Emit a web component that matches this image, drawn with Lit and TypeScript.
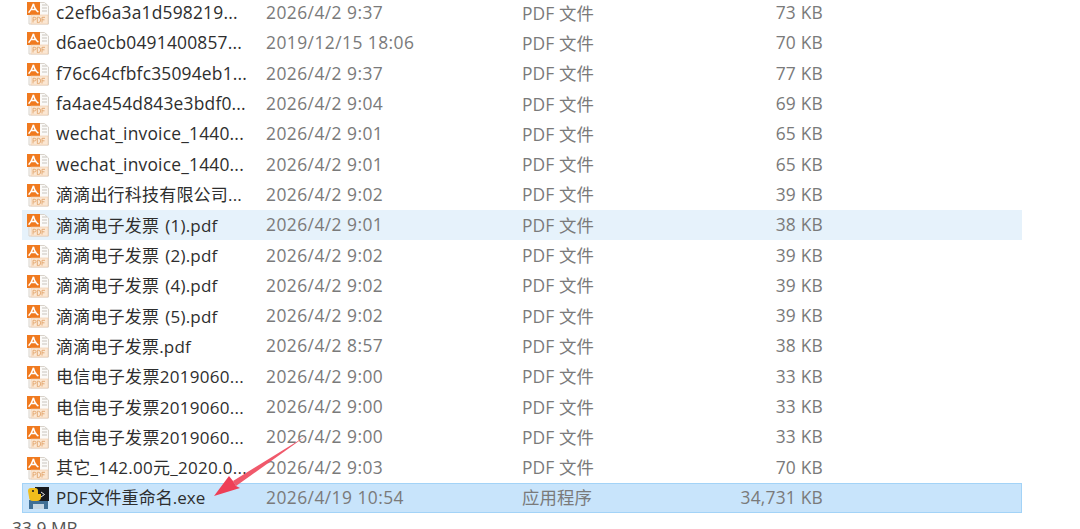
import { LitElement, html, css, svg } from "lit";
import { customElement } from "lit/decorators.js";

type Row = { n: string; d: string; t: string; s: string; k?: string; c?: string };
const P = "PDF 文件";
const rows: Row[] = [
  { n: "c2efb6a3a1d598219...", d: "2026/4/2 9:37", t: P, s: "73 KB" },
  { n: "d6ae0cb0491400857...", d: "2019/12/15 18:06", t: P, s: "70 KB" },
  { n: "f76c64cfbfc35094eb1...", d: "2026/4/2 9:37", t: P, s: "77 KB" },
  { n: "fa4ae454d843e3bdf0...", d: "2026/4/2 9:04", t: P, s: "69 KB" },
  { n: "wechat_invoice_1440...", d: "2026/4/2 9:01", t: P, s: "65 KB" },
  { n: "wechat_invoice_1440...", d: "2026/4/2 9:01", t: P, s: "65 KB" },
  { n: "滴滴出行科技有限公司...", d: "2026/4/2 9:02", t: P, s: "39 KB", c: "cjk" },
  { n: "滴滴电子发票 (1).pdf", d: "2026/4/2 9:01", t: P, s: "38 KB", k: "hover", c: "cjk" },
  { n: "滴滴电子发票 (2).pdf", d: "2026/4/2 9:02", t: P, s: "39 KB", c: "cjk" },
  { n: "滴滴电子发票 (4).pdf", d: "2026/4/2 9:02", t: P, s: "39 KB", c: "cjk" },
  { n: "滴滴电子发票 (5).pdf", d: "2026/4/2 9:02", t: P, s: "39 KB", c: "cjk" },
  { n: "滴滴电子发票.pdf", d: "2026/4/2 8:57", t: P, s: "38 KB", c: "cjk" },
  { n: "电信电子发票2019060...", d: "2026/4/2 9:00", t: P, s: "33 KB", c: "mix" },
  { n: "电信电子发票2019060...", d: "2026/4/2 9:00", t: P, s: "33 KB", c: "mix" },
  { n: "电信电子发票2019060...", d: "2026/4/2 9:00", t: P, s: "33 KB", c: "mix" },
  { n: "其它_142.00元_2020.0...", d: "2026/4/2 9:03", t: P, s: "70 KB", c: "mix" },
  { n: "PDF文件重命名.exe", d: "2026/4/19 10:54", t: "应用程序", s: "34,731 KB", k: "sel", c: "exe" },
];

const pdfIcon = svg`<svg width="24" height="24" viewBox="0 0 24 24">
  <path d="M9 1.5H18.5L22.5 5V23H3V13H9Z" fill="#fbfaf8" stroke="#d8d2ca"/>
  <rect x="1" y="1" width="13" height="13" fill="#f07a1f"/>
  <path d="M7.5 2.8C6.7 5.5 5.5 9 2.6 11.8M7.5 2.8C8.1 6 9 9 12.4 11M4.4 8.6H10.6" fill="none" stroke="#fff" stroke-width="1.5"/>
  <path d="M16 4H21M16 7H21M16 10H21" stroke="#c9c4bd" stroke-width="1"/>
  <rect x="5" y="14" width="17" height="9" fill="#fbe7d3" stroke="#eecaa8" stroke-width=".6"/>
  <path d="M7 21.5V16.3H8.8Q10 16.3 10 17.6T8.8 18.9H7M11.3 16.3V21.5H12.6Q14.6 21.5 14.6 18.9T12.6 16.3ZM16 21.5V16.3H19M16 18.8H18.5" fill="none" stroke="#e2a56c" stroke-width=".9"/>
</svg>`;

const exeIcon = svg`<svg width="24" height="24" viewBox="0 0 24 24">
  <path d="M3 14H22V23H3Z" fill="#3f6f96"/>
  <rect x="7" y="18" width="11" height="5" fill="#c4d6e4"/>
  <rect x="9" y="1" width="14" height="14" fill="#17191d"/>
  <path d="M15 6L18.5 8.5L15 11" fill="none" stroke="#e8e8e8" stroke-width="1"/>
  <path d="M2 5Q2 2 5 2H9Q12 2 12 5V8H15V11Q15 15 11 15H7Q3 15 3 11Z" fill="#f0bd1c"/>
  <circle cx="7" cy="5" r="1" fill="#17191d"/>
</svg>`;

@customElement("app-root")
export class AppRoot extends LitElement {
  static styles = css`
    :host {
      display: block;
      position: relative;
      width: 1080px;
      height: 529px;
      overflow: hidden;
      background: #fff;
      font-family: "Open Sans", "Noto Sans CJK SC", sans-serif;
      font-size: 17.4px;
      color: #2e2e2e;
    }
    .list {
      display: flex;
      flex-direction: column;
      margin: -2px 0 0 22px;
      width: 1000px;
    }
    .row {
      display: grid;
      grid-template-columns: 33px 210px 256px 206px 95px;
      align-items: center;
      height: 30.31px;
      box-sizing: border-box;
      white-space: nowrap;
      border: 1px solid transparent;
    }
    .row.hover {
      background: #e6f2fb;
      border-color: #e6f2fb;
    }
    .row.sel {
      background: #c8e4fb;
      border-color: #a3d3f7;
    }
    .ic {
      display: flex;
      padding-left: 3px;
    }
    .ic svg {
      display: block;
      filter: blur(0.3px);
    }
    .name,
    .d,
    .t,
    .s {
      padding-bottom: 2px;
    }
    .name {
      letter-spacing: 0.2px;
    }
    .name.cjk {
      font-size: 17px;
      letter-spacing: 0.2px;
      word-spacing: 1.5px;
    }
    .name.exe {
      font-size: 17px;
      letter-spacing: 0.05px;
    }
    .name.mix {
      font-size: 17px;
      letter-spacing: 0.28px;
    }
    .d {
      letter-spacing: 0.45px;
    }
    .d,
    .t,
    .s {
      color: #7a7a7a;
    }
    .t {
      letter-spacing: 0.1px;
    }
    .s {
      text-align: right;
      width: 95px;
      letter-spacing: 0.2px;
    }
    .foot {
      margin: 0 0 0 12px;
      padding-top: 5px;
      color: #555;
      line-height: 20px;
    }
    .arrow {
      position: absolute;
      left: 205px;
      top: 430px;
    }
  `;

  render() {
    return html`
      <div class="list">
        ${rows.map(
          (r) => html`<div class="row ${r.k ?? ""}">
            <div class="ic">${r.k === "sel" ? exeIcon : pdfIcon}</div>
            <div class="name ${r.c ?? ""}">${r.n}</div>
            <div class="d">${r.d}</div>
            <div class="t">${r.t}</div>
            <div class="s">${r.s}</div>
          </div>`
        )}
      </div>
      <div class="foot">33.9 MB</div>
      <svg class="arrow" width="110" height="72" viewBox="0 0 110 72">
        <path d="M101 6L28 51L31 56Z" fill="#f0596b" />
        <path d="M9 66L24 46L28 51L31 56L35 58Z" fill="#ee3f57" />
      </svg>
    `;
  }
}
